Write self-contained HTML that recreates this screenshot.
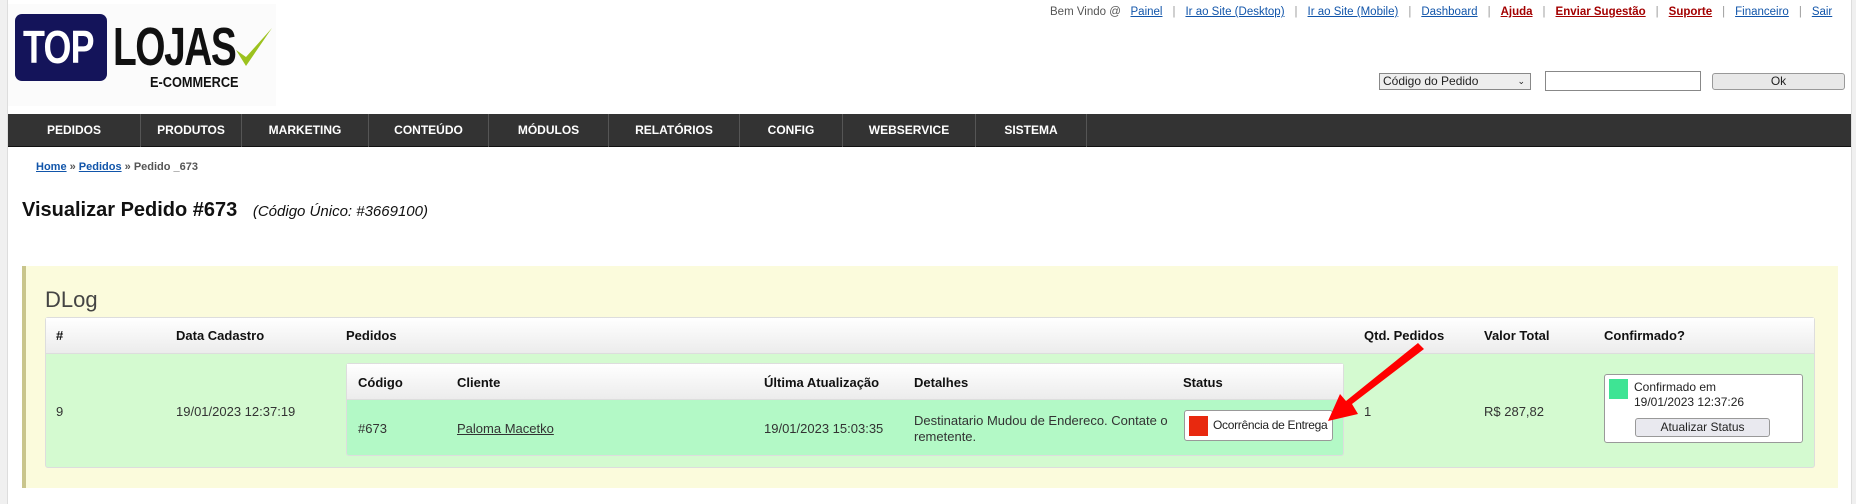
<!DOCTYPE html>
<html><head><meta charset="utf-8"><style>
*{margin:0;padding:0;box-sizing:border-box}
body{width:1856px;height:504px;position:relative;background:#fff;font-family:"Liberation Sans",Arial,sans-serif;overflow:hidden;color:#222}
.a{position:absolute;white-space:nowrap}
.lk{color:#1155aa;text-decoration:underline}
.rd{color:#a30000;font-weight:bold;text-decoration:underline}
.sep{color:#999;margin:0 10px}
.nav{position:absolute;left:8px;top:114px;width:1843px;height:33px;background:#333;border-bottom:1px solid #111}
.nav div{position:absolute;top:0;height:33px;line-height:33px;color:#fff;font-weight:bold;font-size:12px;text-align:center;border-right:1px solid #555}
.th{font-weight:bold;font-size:13px;color:#111}
.td{font-size:13px;color:#333}
</style></head><body>
<div class="a" style="left:0;top:0;width:8px;height:504px;background:#f0f0f0;border-right:1px solid #ddd"></div>
<div class="a" style="left:1851px;top:0;width:5px;height:504px;background:#f0f0f0;border-left:1px solid #ddd"></div>
<!-- logo -->
<div class="a" style="left:8px;top:4px;width:268px;height:102px;background:#fbfbfb"></div>
<div class="a" style="left:15px;top:14px;width:92px;height:67px;background:#14145a;border-radius:7px;overflow:hidden"><div style="color:#fff;font-weight:bold;font-size:46px;line-height:67px;transform:scaleX(0.78);transform-origin:left;margin-left:8px;letter-spacing:-1px">TOP</div></div>
<div class="a" style="left:113px;top:17px;font-size:54px;font-weight:bold;color:#111;line-height:60px;transform:scaleX(0.72);transform-origin:left;letter-spacing:-2px">LOJAS</div>
<svg class="a" style="left:234px;top:26px" width="40" height="44"><path d="M2 24 L12 40 L38 2 L12 31 Z" fill="#9cc21e"/></svg>
<div class="a" style="left:150px;top:74px;font-size:15px;font-weight:bold;color:#111;transform:scaleX(0.85);transform-origin:left">E-COMMERCE</div>
<!-- top links -->
<div class="a" style="left:1050px;top:6px;font-size:11.5px;color:#555">Bem Vindo @ &nbsp; <span class="lk">Painel</span><span class="sep">|</span><span class="lk">Ir ao Site (Desktop)</span><span class="sep">|</span><span class="lk">Ir ao Site (Mobile)</span><span class="sep">|</span><span class="lk">Dashboard</span><span class="sep">|</span><span class="rd">Ajuda</span><span class="sep">|</span><span class="rd">Enviar Sugestão</span><span class="sep">|</span><span class="rd">Suporte</span><span class="sep">|</span><span class="lk">Financeiro</span><span class="sep">|</span><span class="lk">Sair</span></div>
<div class="a" style="left:1379px;top:73px;width:152px;height:17px;border:1px solid #888;background:#eee;font-size:12px;line-height:15px;padding-left:3px">Código do Pedido<span style="position:absolute;right:5px;font-size:9px">&#8964;</span></div>
<div class="a" style="left:1545px;top:71px;width:156px;height:20px;border:1px solid #888;background:#fff"></div>
<div class="a" style="left:1712px;top:73px;width:133px;height:17px;border:1px solid #999;border-radius:3px;background:#e8e8e8;font-size:12px;line-height:15px;text-align:center">Ok</div>
<!-- nav -->
<div class="nav">
<div style="left:0;width:133px">PEDIDOS</div>
<div style="left:133px;width:101px">PRODUTOS</div>
<div style="left:234px;width:127px">MARKETING</div>
<div style="left:361px;width:120px">CONTEÚDO</div>
<div style="left:481px;width:120px">MÓDULOS</div>
<div style="left:601px;width:131px">RELATÓRIOS</div>
<div style="left:732px;width:103px">CONFIG</div>
<div style="left:835px;width:133px">WEBSERVICE</div>
<div style="left:968px;width:111px">SISTEMA</div>
</div>
<div class="a" style="left:36px;top:161px;font-size:11px;font-weight:bold;color:#555"><span class="lk">Home</span> » <span class="lk">Pedidos</span> » Pedido _673</div>
<div class="a" style="left:22px;top:199px;font-size:20px;font-weight:bold;color:#111">Visualizar Pedido #673 <span style="font-size:15px;font-weight:normal;font-style:italic;margin-left:10px">(Código Único: #3669100)</span></div>
<!-- yellow box -->
<div class="a" style="left:22px;top:266px;width:1816px;height:222px;background:#fbfbdc;border-left:4px solid #c9c58c"></div>
<div class="a" style="left:45px;top:287px;font-size:22px;color:#444">DLog</div>
<div class="a" style="left:45px;top:317px;width:1770px;height:151px;background:#d4fad0;border:1px solid #ddd;border-radius:3px"></div>
<div class="a" style="left:46px;top:318px;width:1768px;height:36px;background:linear-gradient(#fff,#ececec);border-bottom:1px solid #ddd"></div>
<div class="a th" style="left:56px;top:328px">#</div>
<div class="a th" style="left:176px;top:328px">Data Cadastro</div>
<div class="a th" style="left:346px;top:328px">Pedidos</div>
<div class="a th" style="left:1364px;top:328px">Qtd. Pedidos</div>
<div class="a th" style="left:1484px;top:328px">Valor Total</div>
<div class="a th" style="left:1604px;top:328px">Confirmado?</div>
<div class="a td" style="left:56px;top:404px">9</div>
<div class="a td" style="left:176px;top:404px">19/01/2023 12:37:19</div>
<div class="a td" style="left:1364px;top:404px">1</div>
<div class="a td" style="left:1484px;top:404px">R$ 287,82</div>
<!-- inner table -->
<div class="a" style="left:346px;top:363px;width:998px;height:93px;background:#b3f9c6;border:1px solid #ddd;border-radius:3px"></div>
<div class="a" style="left:347px;top:364px;width:996px;height:36px;background:linear-gradient(#fff,#ececec);border-bottom:1px solid #ddd"></div>
<div class="a th" style="left:358px;top:375px">Código</div>
<div class="a th" style="left:457px;top:375px">Cliente</div>
<div class="a th" style="left:764px;top:375px">Última Atualização</div>
<div class="a th" style="left:914px;top:375px">Detalhes</div>
<div class="a th" style="left:1183px;top:375px">Status</div>
<div class="a td" style="left:358px;top:421px">#673</div>
<div class="a td" style="left:457px;top:421px;text-decoration:underline">Paloma Macetko</div>
<div class="a td" style="left:764px;top:421px">19/01/2023 15:03:35</div>
<div class="a td" style="left:914px;top:413px;line-height:16px">Destinatario Mudou de Endereco. Contate o<br>remetente.</div>
<div class="a" style="left:1184px;top:410px;width:149px;height:31px;background:#fff;border:1px solid #999;border-radius:3px"></div>
<div class="a" style="left:1189px;top:416px;width:19px;height:20px;background:#e8290f"></div>
<div class="a" style="left:1213px;top:418px;font-size:12px;color:#222;letter-spacing:-0.3px">Ocorrência de Entrega</div>
<!-- confirm box -->
<div class="a" style="left:1604px;top:374px;width:199px;height:69px;background:#fff;border:1px solid #999;border-radius:3px"></div>
<div class="a" style="left:1609px;top:379px;width:19px;height:20px;background:#3ee494"></div>
<div class="a" style="left:1634px;top:380px;font-size:12px;line-height:15px;color:#222">Confirmado em<br>19/01/2023 12:37:26</div>
<div class="a" style="left:1635px;top:418px;width:135px;height:19px;border:1px solid #999;border-radius:3px;background:#e9e9ef;font-size:12px;line-height:17px;text-align:center">Atualizar Status</div>
<!-- arrow -->
<svg class="a" style="left:0;top:0" width="1856" height="504"><path d="M1424 349 L1352 404 L1358 414 L1328 421 L1340 394 L1346 401 L1418 343 Z" fill="#f00"/></svg>
</body></html>
